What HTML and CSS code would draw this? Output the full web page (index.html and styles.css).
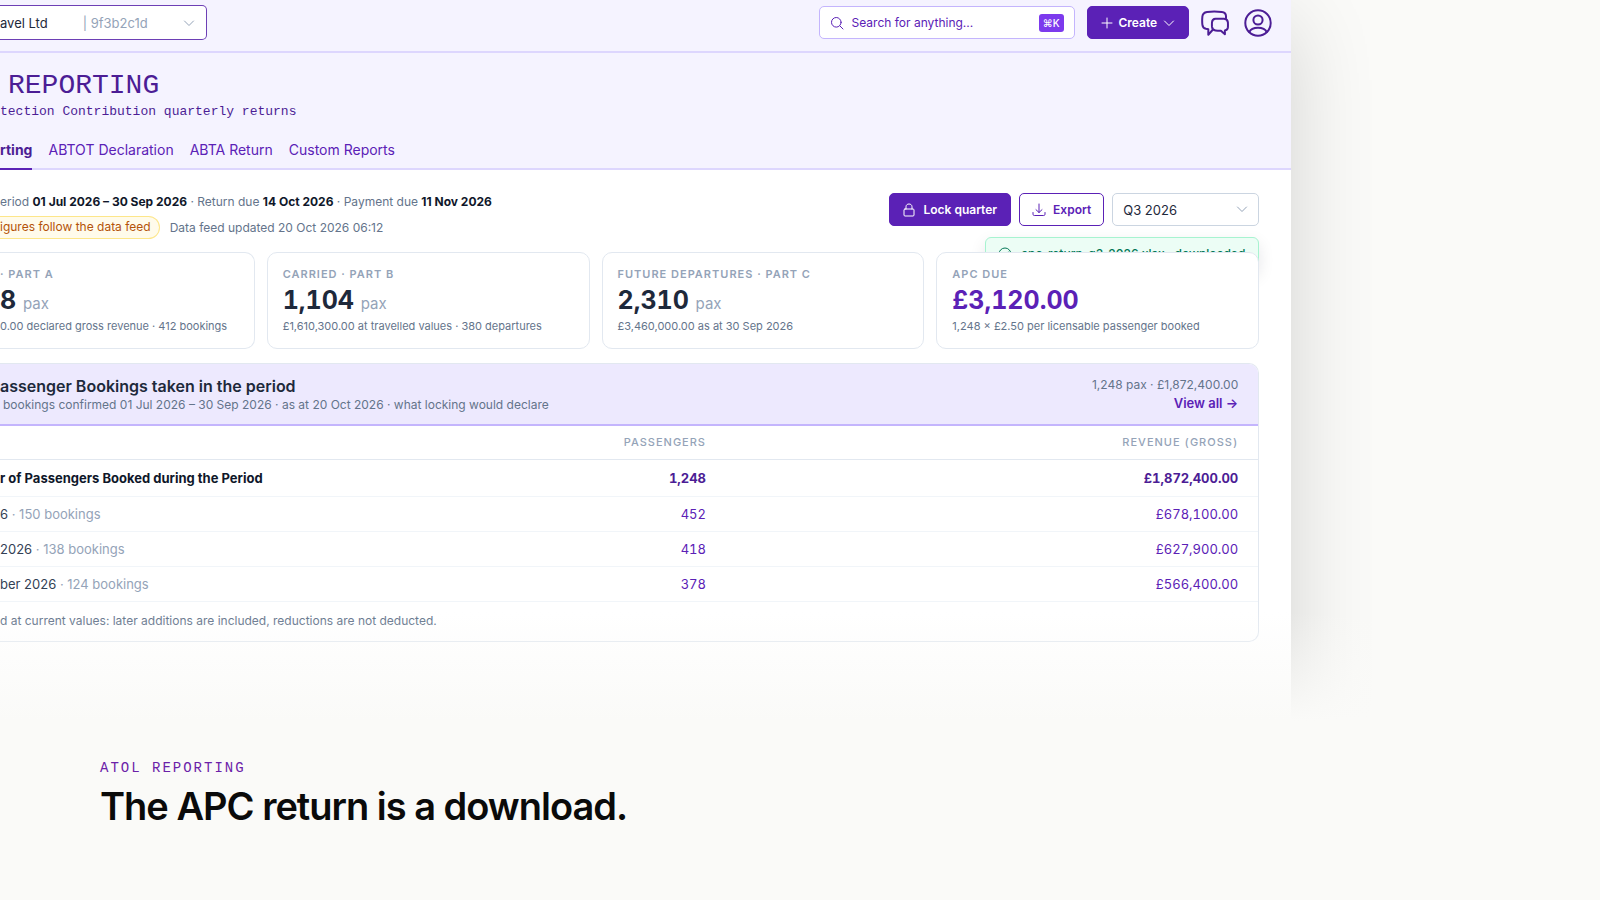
FILE: index.html
```html
<!DOCTYPE html>
<html lang="en">
<head>
    <meta charset="UTF-8">
    <meta name="viewport" content="width=device-width, initial-scale=1.0">
    <title>ATOL Reporting</title>
    <link rel="stylesheet" href="styles.css">
</head>
<body>
    <section class="stage">
        <div class="window">
            <header class="topbar">
                <button type="button" class="company">
                    <span class="company-name">avel Ltd</span>
                    <span class="company-id">| 9f3b2c1d</span>
                    <svg class="chevron" width="12" height="12" viewBox="0 0 12 12"><path d="M1.500 4l4.500 4.500L10.500 4"/></svg>
                </button>
                <div class="topbar-right">
                    <div class="search">
                        <svg class="icon" width="14" height="14" viewBox="0 0 14 14"><circle cx="6.300" cy="6.300" r="4.800"/><path d="M10 10l3 3"/></svg>
                        <input type="text" class="search-input" placeholder="Search for anything..." aria-label="Search for anything">
                        <kbd class="shortcut">⌘K</kbd>
                    </div>
                    <button type="button" class="button button-primary button-create">
                        <svg class="icon" width="12" height="12" viewBox="0 0 12 12"><path d="M6 1v10M1 6h10"/></svg>
                        Create
                        <svg class="icon" width="12" height="12" viewBox="0 0 12 12"><path d="M1.500 4L6 8.500 10.500 4"/></svg>
                    </button>
                    <button type="button" class="icon-button" aria-label="Messages">
                        <svg width="28" height="28" viewBox="0 0 28 28">
                            <path d="M25 9.200V7C24.900 4.200 23.500 3.200 20.800 2.900 16 2.400 10.500 2.400 6 2.900 3.200 3.300 1.700 4.600 1.400 7.300c-.3 3-.3 6 0 8.500.3 2.500 1.500 3.500 3.600 4l2.300.4v5.600l4.200-4.800"/>
                            <path d="M14.500 9.700h8.500c2.500.2 3.700 1.300 3.900 3.700.1 1.700.1 3.400 0 5-.2 1.900-1.200 2.800-3 3.100v3.700l-4-3.500c-2 0-3.600 0-5.400-.2-2.300-.3-3.300-1.400-3.500-3.600-.1-1.600-.1-3.100 0-4.600.2-2.300 1.300-3.500 3.500-3.600z"/>
                        </svg>
                    </button>
                    <button type="button" class="icon-button" aria-label="Account">
                        <svg width="28" height="28" viewBox="0 0 28 28">
                            <circle cx="14" cy="14" r="12.700"/>
                            <circle cx="14" cy="11" r="4.600"/>
                            <path d="M5.300 23c1.500-3.300 5-4.200 8.700-4.200s7.200.9 8.700 4.200"/>
                        </svg>
                    </button>
                </div>
            </header>

            <div class="page-head">
                <h1 class="page-title">REPORTING</h1>
                <p class="page-subtitle">tection Contribution quarterly returns</p>
                <nav class="tabs">
                    <a href="#" class="tab tab-active">rting</a>
                    <a href="#" class="tab">ABTOT Declaration</a>
                    <a href="#" class="tab">ABTA Return</a>
                    <a href="#" class="tab">Custom Reports</a>
                </nav>
            </div>

            <main class="content">
                <div class="toolbar">
                    <div class="period">
                        <p class="period-line">eriod <b>01 Jul 2026 – 30 Sep 2026</b> · Return due <b>14 Oct 2026</b> · Payment due <b>11 Nov 2026</b></p>
                        <div class="feed">
                            <span class="badge">igures follow the data feed</span>
                            <span>Data feed updated 20 Oct 2026 06:12</span>
                        </div>
                    </div>
                    <div class="actions">
                        <button type="button" class="button button-primary">
                            <svg class="icon" width="12" height="14" viewBox="0 0 12 14"><rect x="1" y="6" width="10" height="7" rx="1"/><path d="M3 6V3.800C3 2 4.300 1 6 1s3 1 3 2.800V6"/></svg>
                            Lock quarter
                        </button>
                        <button type="button" class="button button-outline">
                            <svg class="icon" width="14" height="14" viewBox="0 0 14 14"><path d="M7 1v8.500M4 6.700l3 2.800 3-2.800M1 9.500v1.800c0 .8.500 1.200 1.300 1.200h9.400c.8 0 1.300-.4 1.300-1.200V9.500"/></svg>
                            Export
                        </button>
                        <div class="quarter">
                            <select class="quarter-select" aria-label="Quarter">
                                <option>Q3 2026</option>
                            </select>
                            <svg class="chevron quarter-chevron" width="12" height="12" viewBox="0 0 12 12"><path d="M1.500 4L6 8.500 10.500 4"/></svg>
                        </div>
                        <div class="toast" role="status">
                            <svg class="icon" width="14" height="14" viewBox="0 0 14 14"><circle cx="7" cy="7" r="6"/><path d="M4.500 7.500l2 2 3.500-4.500"/></svg>
                            apc-return-q3-2026.xlsx · downloaded
                        </div>
                    </div>
                </div>

                <div class="cards">
                    <article class="card card-first">
                        <h2 class="card-label">· PART A</h2>
                        <p class="card-value">8 <small>pax</small></p>
                        <p class="card-note">0.00 declared gross revenue · 412 bookings</p>
                    </article>
                    <article class="card">
                        <h2 class="card-label">CARRIED · PART B</h2>
                        <p class="card-value">1,104 <small>pax</small></p>
                        <p class="card-note">£1,610,300.00 at travelled values · 380 departures</p>
                    </article>
                    <article class="card">
                        <h2 class="card-label">FUTURE DEPARTURES · PART C</h2>
                        <p class="card-value">2,310 <small>pax</small></p>
                        <p class="card-note">£3,460,000.00 as at 30 Sep 2026</p>
                    </article>
                    <article class="card">
                        <h2 class="card-label">APC DUE</h2>
                        <p class="card-value card-value-due">£3,120.00</p>
                        <p class="card-note">1,248 × £2.50 per licensable passenger booked</p>
                    </article>
                </div>

                <section class="panel">
                    <div class="panel-head">
                        <div>
                            <h2 class="panel-title">assenger Bookings taken in the period</h2>
                            <p class="panel-subtitle">bookings confirmed 01 Jul 2026 – 30 Sep 2026 · as at 20 Oct 2026 · what locking would declare</p>
                        </div>
                        <div class="panel-summary">
                            <span>1,248 pax · £1,872,400.00</span>
                            <a href="#" class="view-all">View all →</a>
                        </div>
                    </div>
                    <table class="bookings">
                        <thead>
                            <tr>
                                <th></th>
                                <th class="number">PASSENGERS</th>
                                <th class="number revenue">REVENUE (GROSS)</th>
                            </tr>
                        </thead>
                        <tbody>
                            <tr class="total">
                                <td>r of Passengers Booked during the Period</td>
                                <td class="number">1,248</td>
                                <td class="number">£1,872,400.00</td>
                            </tr>
                            <tr>
                                <td>6 <span class="muted">· 150 bookings</span></td>
                                <td class="number">452</td>
                                <td class="number">£678,100.00</td>
                            </tr>
                            <tr>
                                <td>2026 <span class="muted">· 138 bookings</span></td>
                                <td class="number">418</td>
                                <td class="number">£627,900.00</td>
                            </tr>
                            <tr>
                                <td>ber 2026 <span class="muted">· 124 bookings</span></td>
                                <td class="number">378</td>
                                <td class="number">£566,400.00</td>
                            </tr>
                        </tbody>
                    </table>
                    <p class="panel-note">d at current values: later additions are included, reductions are not deducted.</p>
                </section>
            </main>
        </div>
    </section>

    <section class="caption">
        <p class="eyebrow">ATOL REPORTING</p>
        <h2 class="headline">The APC return is a download.</h2>
    </section>
</body>
</html>
```
FILE: styles.css
```css
* {
    box-sizing: border-box;
}

body {
    margin: 0;
    min-height: 100vh;
    background-color: #fafaf8;
    color: #1e293b;
    font-family: Inter, "Open Sans", sans-serif;
    font-size: 12px;
    line-height: 16px;
    overflow: hidden;
}

h1, h2, p {
    margin: 0;
}

button, input, select, kbd {
    font: inherit;
}

svg {
    flex: none;
    fill: none;
    stroke: currentColor;
    stroke-linecap: round;
    stroke-linejoin: round;
}

/* product window, cut by the left and top edges and faded at the bottom */
.stage {
    position: relative;
    padding-right: 19.3%;
    overflow: hidden;
}

.stage::after {
    content: "";
    position: absolute;
    left: 0;
    right: 0;
    bottom: 0;
    height: 128px;
    background: linear-gradient(to bottom, rgba(250, 250, 248, 0), #fafaf8 85%);
}

.window {
    background-color: #fff;
    padding-bottom: 98px;
    box-shadow: 0 24px 80px rgba(0, 0, 0, 0.16);
}

.topbar {
    display: flex;
    justify-content: space-between;
    align-items: center;
    padding: 5px 19px 11px 0;
    background-color: #f5f3ff;
    border-bottom: 2px solid #ddd6fe;
}

.company {
    display: flex;
    align-items: center;
    width: 207px;
    height: 35px;
    padding: 0 11px 0 0;
    background-color: #fff;
    border: 1px solid #6d3fb5;
    border-left: none;
    border-radius: 0 5px 5px 0;
    color: #1e293b;
    font-size: 13px;
    cursor: pointer;
}

.company-id {
    flex: 1;
    margin-left: 35px;
    text-align: left;
    color: #94a3b8;
}

.chevron {
    color: #94a3b8;
}

.topbar-right {
    display: flex;
    align-items: center;
    gap: 12px;
}

.search {
    display: flex;
    align-items: center;
    gap: 8px;
    width: 256px;
    height: 33px;
    padding: 0 10px;
    background-color: #fff;
    border: 1px solid #c4b5fd;
    border-radius: 5px;
    color: #5b21b6;
}

.search-input {
    flex: 1;
    min-width: 0;
    padding: 0;
    border: none;
    outline: none;
    background: none;
}

.search-input::placeholder {
    color: #5b21b6;
}

.shortcut {
    padding: 1px 4px;
    background-color: #7c3aed;
    border-radius: 3px;
    color: #fff;
    font-size: 10px;
    font-weight: 500;
}

.button {
    display: flex;
    align-items: center;
    gap: 8px;
    height: 33px;
    padding: 0 13px;
    border: 1px solid #5b21b6;
    border-radius: 5px;
    font-size: 12px;
    font-weight: 600;
    cursor: pointer;
}

.button-primary {
    background-color: #5b21b6;
    color: #fff;
}

.button-outline {
    gap: 7px;
    padding: 0 12px;
    background-color: #fff;
    color: #5b21b6;
}

.button-create {
    gap: 6px;
}

.icon-button {
    display: flex;
    padding: 0;
    border: none;
    background: none;
    color: #4c1d95;
    stroke-width: 2;
    cursor: pointer;
}

.icon-button + .icon-button {
    margin-left: 3px;
}

.page-head {
    padding-top: 17px;
    background-color: #f5f3ff;
    border-bottom: 2px solid #ddd6fe;
}

.page-title {
    padding-left: 8px;
    color: #4c1d95;
    font-family: "Liberation Mono", monospace;
    font-size: 28px;
    font-weight: normal;
    line-height: 32px;
}

.page-subtitle {
    margin-top: 2px;
    color: #4c1d95;
    font-family: "Liberation Mono", monospace;
    font-size: 13px;
    line-height: 16px;
}

.tabs {
    display: flex;
    gap: 16px;
    margin-top: 20px;
}

.tab {
    margin-bottom: -2px;
    padding-bottom: 8px;
    border-bottom: 2px solid transparent;
    color: #5b21b6;
    font-size: 14px;
    line-height: 20px;
    text-decoration: none;
}

.tab-active {
    border-color: #5b21b6;
    color: #4c1d95;
    font-weight: 700;
}

.content {
    padding: 23px 32px 0 0;
}

.toolbar {
    display: flex;
    justify-content: space-between;
    align-items: flex-start;
    color: #64748b;
}

.period {
    padding-top: 1px;
}

.period-line b {
    color: #0f172a;
}

.feed {
    display: flex;
    align-items: center;
    gap: 10px;
    margin-top: 6px;
}

.badge {
    padding: 2px 8px 3px 0;
    background-color: #fffbeb;
    border: 1px solid #fde68a;
    border-left: none;
    border-radius: 0 12px 12px 0;
    color: #b45309;
}

.actions {
    position: relative;
    display: flex;
    gap: 8px;
}

.quarter {
    position: relative;
}

.quarter-select {
    width: 147px;
    height: 33px;
    padding: 0 10px;
    appearance: none;
    background-color: #fff;
    border: 1px solid #cbd5e1;
    border-radius: 5px;
    color: #1e293b;
    font-size: 13px;
}

.quarter-chevron {
    position: absolute;
    top: 10px;
    right: 11px;
    pointer-events: none;
}

.toast {
    position: absolute;
    top: 44px;
    right: 0;
    display: flex;
    align-items: center;
    gap: 9px;
    width: 274px;
    height: 34px;
    padding: 0 12px;
    background-color: #ecfdf5;
    border: 1px solid #a7f3d0;
    border-radius: 6px;
    box-shadow: 0 6px 16px rgba(15, 23, 42, 0.1);
    color: #047857;
    font-weight: 500;
    white-space: nowrap;
}

/* the cards sit over the lower half of the toast */
.cards {
    position: relative;
    display: grid;
    grid-template-columns: 254fr 322fr 322fr 322fr;
    gap: 12px;
    margin-top: 13px;
}

.card {
    padding: 13px 15px 14px;
    background-color: #fff;
    border: 1px solid #e2e8f0;
    border-radius: 10px;
}

.card-first {
    padding-left: 0;
    border-left: none;
    border-radius: 0 10px 10px 0;
}

.card-label {
    color: #94a3b8;
    font-size: 11px;
    font-weight: 600;
    line-height: 16px;
    letter-spacing: 1px;
}

.card-value {
    margin: 2px 0;
    font-size: 25px;
    font-weight: 700;
    line-height: 32px;
    font-variant-numeric: tabular-nums;
}

.card-value small {
    color: #94a3b8;
    font-size: 15px;
    font-weight: normal;
    line-height: 16px;
}

.card-value-due {
    color: #5b21b6;
}

.card-note {
    color: #64748b;
    font-size: 11px;
    white-space: nowrap;
}

.panel {
    margin-top: 14px;
    border: 1px solid #e2e8f0;
    border-left: none;
    border-radius: 0 10px 10px 0;
    overflow: hidden;
}

.panel-head {
    display: flex;
    justify-content: space-between;
    padding: 12px 20px 10px 0;
    background-color: #ede9fe;
    border-bottom: 2px solid #c4b5fd;
}

.panel-title {
    font-size: 16px;
    font-weight: 600;
    line-height: 20px;
}

.panel-subtitle {
    padding-left: 3px;
    color: #64748b;
    line-height: 18px;
}

.panel-summary {
    display: flex;
    flex-direction: column;
    align-items: flex-end;
    color: #64748b;
    line-height: 18px;
}

.view-all {
    color: #5b21b6;
    font-size: 13px;
    font-weight: 600;
    text-decoration: none;
}

.bookings {
    width: 100%;
    border-collapse: collapse;
    font-size: 13px;
    line-height: 18px;
}

.bookings th {
    padding: 7px 20px 8px 0;
    border-bottom: 1px solid #e2e8f0;
    color: #94a3b8;
    font-size: 11px;
    font-weight: 500;
    letter-spacing: 1px;
}

.bookings td {
    padding: 8px 20px 8px 0;
    border-bottom: 1px solid #f1f5f9;
    color: #334155;
}

.bookings .number {
    text-align: right;
    font-variant-numeric: tabular-nums;
}

.bookings td.number {
    color: #5b21b6;
}

.bookings .revenue {
    width: 42.3%;
}

.bookings .total td {
    padding: 9px 20px 9px 0;
    color: #0f172a;
    font-weight: 700;
}

.bookings .total td.number {
    color: #4c1d95;
}

.bookings .muted {
    color: #94a3b8;
}

.panel-note {
    padding: 11px 0 12px;
    color: #64748b;
}

.caption {
    padding: 18px 100px 0;
}

.eyebrow {
    color: #6b21a8;
    font-family: "Liberation Mono", monospace;
    font-size: 14px;
    line-height: 20px;
    letter-spacing: 2px;
}

.headline {
    margin-top: 4px;
    color: #0a0a0a;
    font-size: 38px;
    font-weight: 600;
    line-height: 48px;
    letter-spacing: -1px;
}
```
